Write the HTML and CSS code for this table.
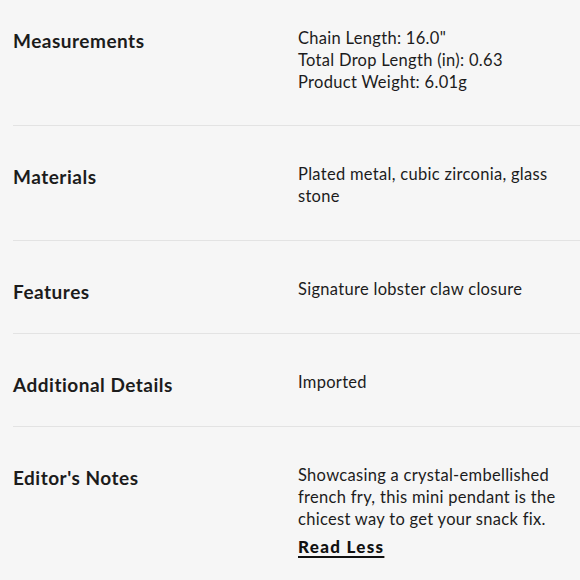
FILE: index.html
```html
<!DOCTYPE html>
<html lang="en">
<head>
<meta charset="utf-8">
<link rel="stylesheet" href="styles.css">
</head>
<body>
<div class="details">
  <div class="row">
    <div class="label">Measurements</div>
    <div class="value">
      <div>Chain Length: 16.0"</div>
      <div>Total Drop Length (in): 0.63</div>
      <div>Product Weight: 6.01g</div>
    </div>
  </div>
  <div class="row">
    <div class="label">Materials</div>
    <div class="value">Plated metal, cubic zirconia, glass stone</div>
  </div>
  <div class="row">
    <div class="label">Features</div>
    <div class="value">Signature lobster claw closure</div>
  </div>
  <div class="row">
    <div class="label">Additional Details</div>
    <div class="value">Imported</div>
  </div>
  <div class="row">
    <div class="label">Editor's Notes</div>
    <div class="value">
      <div>Showcasing a crystal-embellished french fry, this mini pendant is the chicest way to get your snack fix.</div>
      <a class="more" href="#">Read Less</a>
    </div>
  </div>
</div>
</body>
</html>
```
FILE: styles.css
```css
html, body {
  margin: 0;
  padding: 0;
  background: #f6f6f6;
}
body {
  font-family: "Lato", "Liberation Sans", sans-serif;
  color: #1c1c1c;
  overflow: hidden;
}
.details {
  margin-top: -10px;
  padding-left: 13px;
}
.row {
  display: grid;
  grid-template-columns: 285px 1fr;
  padding: 37px 0 33px;
  border-bottom: 1px solid #e3e3e3;
}
.row:first-child {
  padding-bottom: 32px;
}
.label {
  font-size: 19px;
  font-weight: 700;
  line-height: 16px;
  padding-top: 6px;
  letter-spacing: 0.5px;
}
.value {
  font-size: 16.5px;
  line-height: 22px;
  padding-right: 14px;
  letter-spacing: 0.3px;
}
.more {
  display: inline-block;
  margin-top: 6px;
  font-size: 17px;
  font-weight: 900;
  letter-spacing: 1.3px;
  color: #111;
  text-decoration: underline;
  text-decoration-thickness: 2px;
  text-underline-offset: 3px;
}
```
